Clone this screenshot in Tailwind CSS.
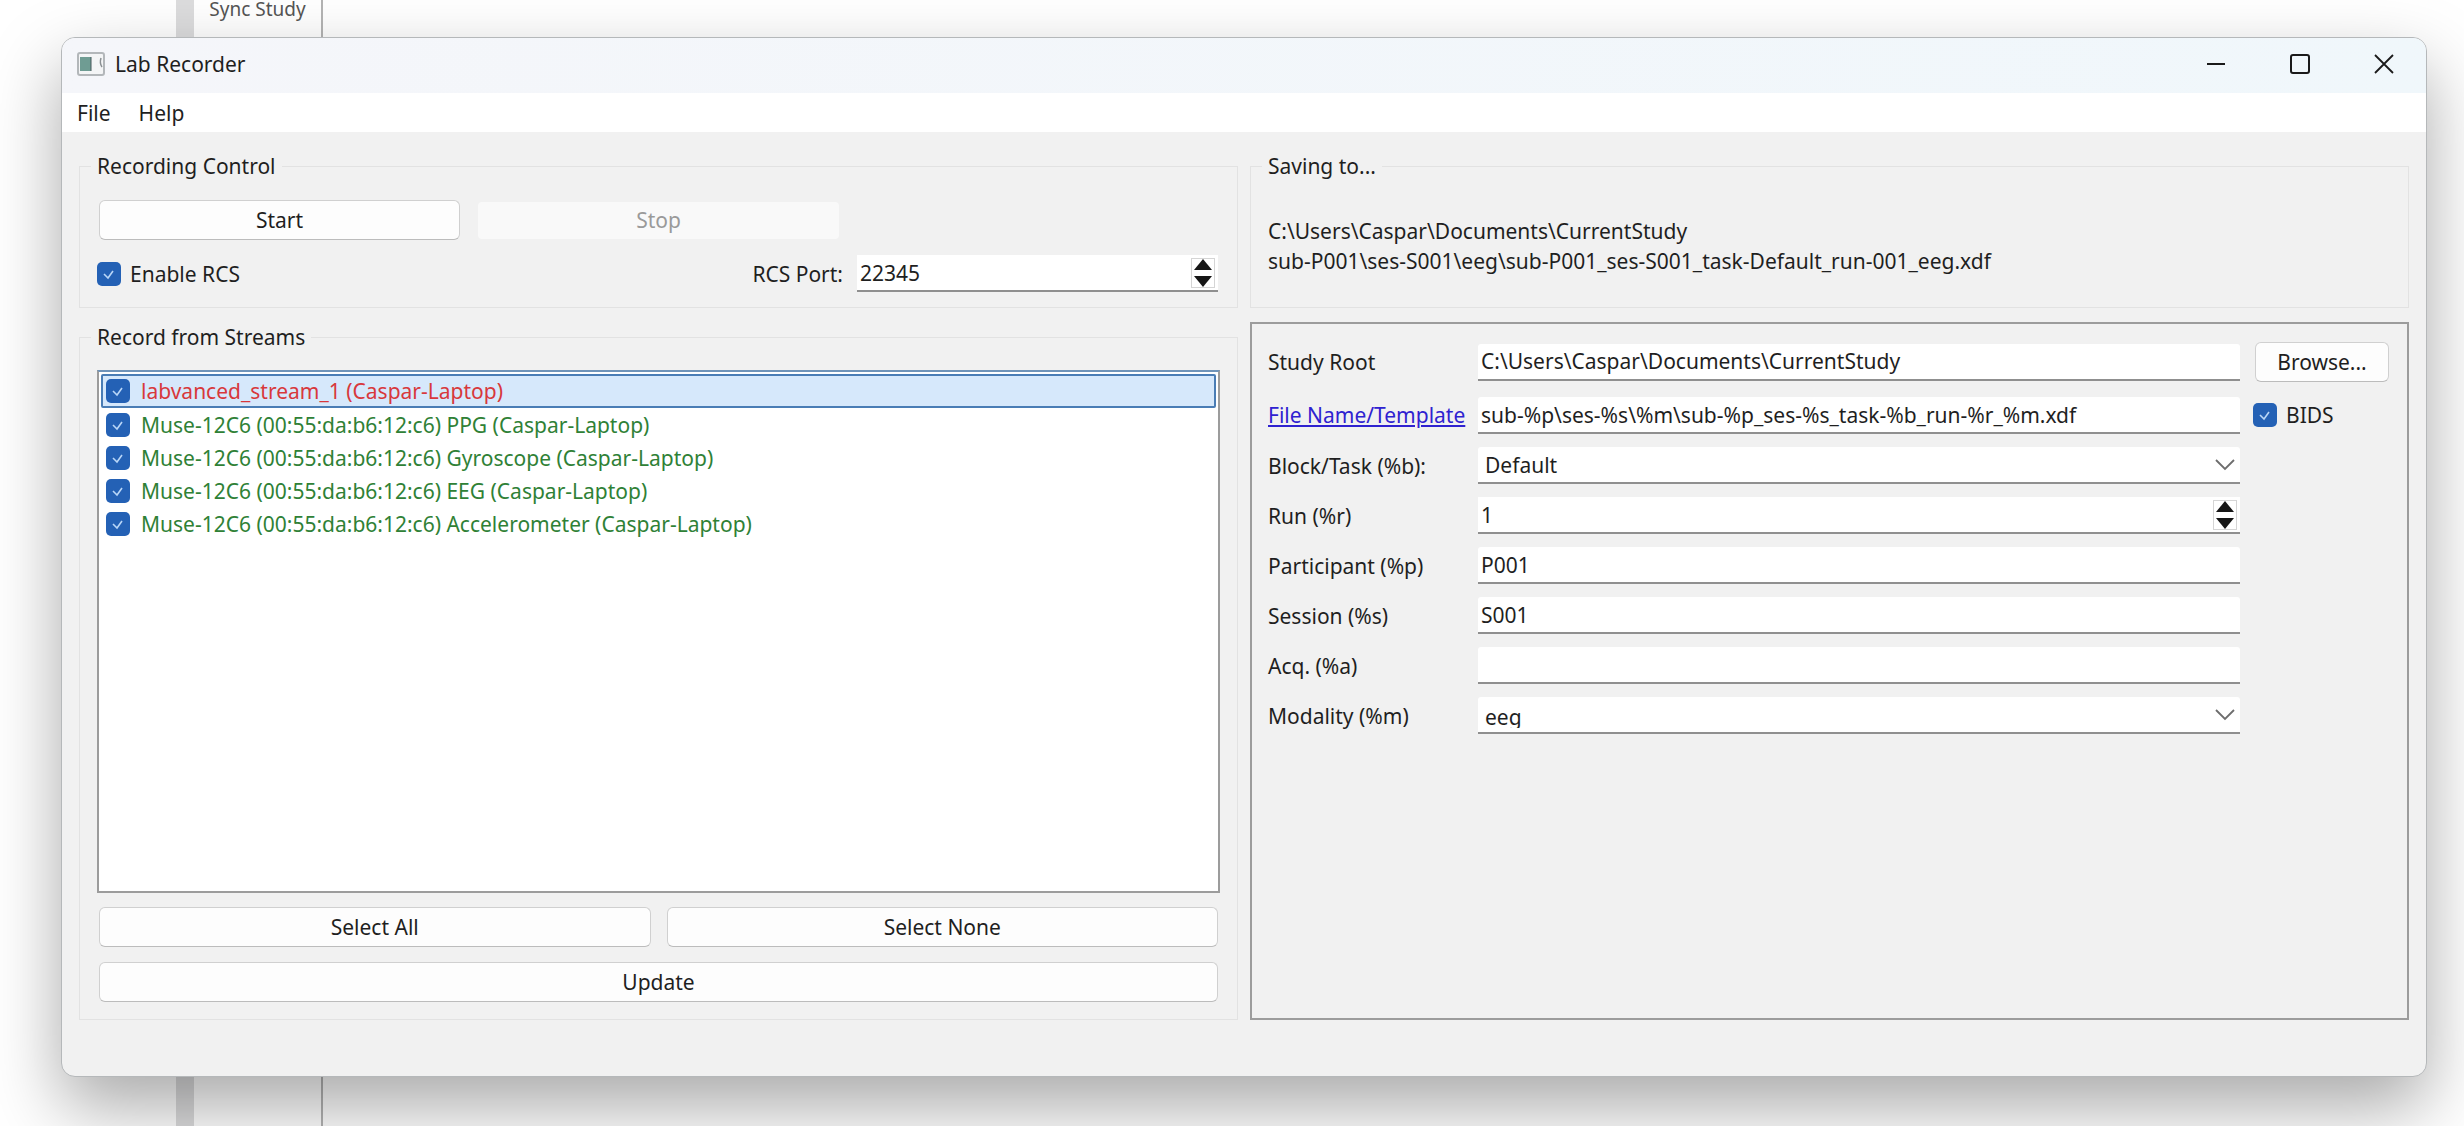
<!DOCTYPE html>
<html lang="en">

<head>
    <meta charset="UTF-8" />
    <meta name="viewport" content="width=device-width, initial-scale=1.0" />
    <title>Lab Recorder</title>
    <script src="https://cdn.jsdelivr.net/npm/@tailwindcss/browser@4"></script>
</head>

<body class="relative flex min-h-screen overflow-hidden bg-white pt-[37px] pr-[37px] pb-[49px] pl-[61px] font-['Noto_Sans',sans-serif] text-[21px] leading-[30px] text-[#1f1f1f]">
    <!-- page behind the window -->
    <div class="absolute inset-y-0 left-[176px] w-[147px] border-r-2 border-l-[18px] border-r-[#b4b4b4] border-l-[#dcdcdd]">
        <a href="#" class="-mt-[6px] block text-center text-[19px] text-[#555]">Sync Study</a>
    </div>

    <main class="relative flex flex-1 flex-col overflow-hidden rounded-[14px] border border-[#b5b8ba] bg-[#f1f1f1] shadow-[0_30px_70px_rgba(0,0,0,0.34)]">
        <header class="flex h-[55px] items-center bg-linear-to-r from-[#f5f6fa] to-[#f0f7fb] pb-[3px] pl-[15px]">
            <svg class="h-6 w-7" viewBox="0 0 28 24" fill="none">
                <rect x="1" y="1" width="26" height="22" rx="2" fill="#f4f5f6" stroke="#b3b7ba" stroke-width="2" />
                <rect x="3" y="5" width="11" height="14" fill="#6f9c93" />
                <path d="M14 5v14" stroke="#46585a" />
                <path d="M24 6c-1 3-1 6 1 9" stroke="#8b9093" stroke-width="1.5" />
            </svg>
            <h1 class="ml-[10px] flex-1">Lab Recorder</h1>
            <button aria-label="Minimize" class="flex h-full w-[84px] items-center justify-center">
                <svg class="size-5" viewBox="0 0 20 20" stroke="#1a1a1a" stroke-width="2"><path d="M1 10h18" /></svg>
            </button>
            <button aria-label="Maximize" class="flex h-full w-[84px] items-center justify-center">
                <svg class="size-5" viewBox="0 0 20 20" fill="none" stroke="#1a1a1a" stroke-width="2"><rect x="1" y="1" width="18" height="18" rx="2" /></svg>
            </button>
            <button aria-label="Close" class="flex h-full w-[84px] items-center justify-center">
                <svg class="size-5" viewBox="0 0 20 20" stroke="#1a1a1a" stroke-width="1.8"><path d="M1 1l18 18M19 1L1 19" /></svg>
            </button>
        </header>

        <nav class="flex h-[39px] items-center gap-7 bg-white pl-[15px]">
            <button>File</button>
            <button>Help</button>
        </nav>

        <div class="grid flex-1 grid-cols-2 grid-rows-[auto_1fr] gap-x-3 gap-y-[14px] px-[17px] pt-[19px] pb-14">
            <fieldset class="border border-[#e2e2e2] px-[17px] pt-[19px] pb-[15px]">
                <legend class="-ml-[6px] px-[6px]">Recording Control</legend>
                <div class="mx-0.5 grid grid-cols-3 items-center gap-x-[18px] gap-y-[15px]">
                    <button class="h-10 rounded-[6px] border border-[#d0d0d0] border-b-[#bcbcbc] bg-[#fdfdfd]">Start</button>
                    <button disabled class="h-[37px] rounded-[4px] bg-[#f9f9f9] text-[#9a9a9a]">Stop</button>
                    <span></span>
                    <label class="-ml-0.5 flex items-center gap-[9px]">
                        <span class="grid size-6">
                            <input type="checkbox" checked class="col-start-1 row-start-1 appearance-none rounded-[5px] bg-[#2461b5]" />
                            <svg class="pointer-events-none col-start-1 row-start-1 size-6" viewBox="0 0 24 24" fill="none" stroke="#b9d6f7" stroke-width="1.6"><path d="M7 12l4 4 5-7" /></svg>
                        </span>
                        Enable RCS
                    </label>
                    <label for="port" class="-mr-1 text-right">RCS Port:</label>
                    <div class="flex h-[37px] items-center border-b-2 border-[#8f8f8f] bg-white pr-[3px]">
                        <input id="port" type="number" value="22345" class="min-w-0 flex-1 [appearance:textfield] pl-[3px] outline-none" />
                        <div class="flex h-[30px] w-6 flex-col border border-[#d5d5d5]">
                            <button aria-label="Increase port" class="flex flex-1 items-start justify-center"><svg class="h-[11px] w-[18px]" viewBox="0 0 18 11" fill="#161616"><path d="M9 0l9 11H0z" /></svg></button>
                            <button aria-label="Decrease port" class="flex flex-1 items-end justify-center"><svg class="h-[11px] w-[18px]" viewBox="0 0 18 11" fill="#161616"><path d="M0 0h18L9 11z" /></svg></button>
                        </div>
                    </div>
                </div>
            </fieldset>

            <fieldset class="border border-[#e2e2e2] px-[17px] pt-[35px]">
                <legend class="-ml-[6px] px-[6px]">Saving to...</legend>
                <p>C:\Users\Caspar\Documents\CurrentStudy<br />sub-P001\ses-S001\eeg\sub-P001_ses-S001_task-Default_run-001_eeg.xdf</p>
            </fieldset>

            <fieldset class="flex flex-col border border-[#e2e2e2] px-[17px] pt-[18px] pb-[17px]">
                <legend class="-ml-[6px] px-[6px]">Record from Streams</legend>
                <ul class="flex-1 border-2 border-[#9c9c9c] border-t-[#6f93b8] bg-white p-0.5">
                    <li class="rounded-[2px] border-2 border-[#4a7db5] bg-[#d6e8fb]">
                        <label class="flex h-[30px] items-center gap-[11px] pl-[3px] text-[#d8383c]">
                            <span class="grid size-6">
                                <input type="checkbox" checked class="col-start-1 row-start-1 appearance-none rounded-[5px] bg-[#2461b5]" />
                                <svg class="pointer-events-none col-start-1 row-start-1 size-6" viewBox="0 0 24 24" fill="none" stroke="#b9d6f7" stroke-width="1.6"><path d="M7 12l4 4 5-7" /></svg>
                            </span>
                            labvanced_stream_1 (Caspar-Laptop)
                        </label>
                    </li>
                    <li>
                        <label class="flex h-[33px] items-center gap-[11px] pl-[5px] text-[#2f8136]">
                            <span class="grid size-6">
                                <input type="checkbox" checked class="col-start-1 row-start-1 appearance-none rounded-[5px] bg-[#2461b5]" />
                                <svg class="pointer-events-none col-start-1 row-start-1 size-6" viewBox="0 0 24 24" fill="none" stroke="#b9d6f7" stroke-width="1.6"><path d="M7 12l4 4 5-7" /></svg>
                            </span>
                            Muse-12C6 (00:55:da:b6:12:c6) PPG (Caspar-Laptop)
                        </label>
                    </li>
                    <li>
                        <label class="flex h-[33px] items-center gap-[11px] pl-[5px] text-[#2f8136]">
                            <span class="grid size-6">
                                <input type="checkbox" checked class="col-start-1 row-start-1 appearance-none rounded-[5px] bg-[#2461b5]" />
                                <svg class="pointer-events-none col-start-1 row-start-1 size-6" viewBox="0 0 24 24" fill="none" stroke="#b9d6f7" stroke-width="1.6"><path d="M7 12l4 4 5-7" /></svg>
                            </span>
                            Muse-12C6 (00:55:da:b6:12:c6) Gyroscope (Caspar-Laptop)
                        </label>
                    </li>
                    <li>
                        <label class="flex h-[33px] items-center gap-[11px] pl-[5px] text-[#2f8136]">
                            <span class="grid size-6">
                                <input type="checkbox" checked class="col-start-1 row-start-1 appearance-none rounded-[5px] bg-[#2461b5]" />
                                <svg class="pointer-events-none col-start-1 row-start-1 size-6" viewBox="0 0 24 24" fill="none" stroke="#b9d6f7" stroke-width="1.6"><path d="M7 12l4 4 5-7" /></svg>
                            </span>
                            Muse-12C6 (00:55:da:b6:12:c6) EEG (Caspar-Laptop)
                        </label>
                    </li>
                    <li>
                        <label class="flex h-[33px] items-center gap-[11px] pl-[5px] text-[#2f8136]">
                            <span class="grid size-6">
                                <input type="checkbox" checked class="col-start-1 row-start-1 appearance-none rounded-[5px] bg-[#2461b5]" />
                                <svg class="pointer-events-none col-start-1 row-start-1 size-6" viewBox="0 0 24 24" fill="none" stroke="#b9d6f7" stroke-width="1.6"><path d="M7 12l4 4 5-7" /></svg>
                            </span>
                            Muse-12C6 (00:55:da:b6:12:c6) Accelerometer (Caspar-Laptop)
                        </label>
                    </li>
                </ul>
                <div class="mx-0.5 mt-[14px] grid grid-cols-2 gap-x-4 gap-y-[15px]">
                    <button class="h-10 rounded-[6px] border border-[#d0d0d0] border-b-[#bcbcbc] bg-[#fdfdfd]">Select All</button>
                    <button class="h-10 rounded-[6px] border border-[#d0d0d0] border-b-[#bcbcbc] bg-[#fdfdfd]">Select None</button>
                    <button class="col-span-2 h-10 rounded-[6px] border border-[#d0d0d0] border-b-[#bcbcbc] bg-[#fdfdfd]">Update</button>
                </div>
            </fieldset>

            <form class="grid grid-cols-[195px_1fr_134px] content-start items-center gap-x-[15px] gap-y-[13px] border-2 border-[#9c9c9c] py-[18px] pr-[18px] pl-4">
                <label for="root">Study Root</label>
                <input id="root" type="text" value="C:\Users\Caspar\Documents\CurrentStudy" class="h-[37px] min-w-0 rounded-t-[3px] border-b-2 border-[#8f8f8f] bg-white px-[3px] outline-none" />
                <button type="button" class="h-10 rounded-[6px] border border-[#d0d0d0] border-b-[#bcbcbc] bg-[#fdfdfd]">Browse...</button>

                <a href="#" class="whitespace-nowrap text-[#2f22d0] underline">File Name/Template</a>
                <input aria-label="File Name/Template" type="text" value="sub-%p\ses-%s\%m\sub-%p_ses-%s_task-%b_run-%r_%m.xdf" class="mt-0.5 h-[37px] min-w-0 rounded-t-[3px] border-b-2 border-[#8f8f8f] bg-white px-[3px] outline-none" />
                <label class="-ml-0.5 flex items-center gap-[9px]">
                    <span class="grid size-6">
                        <input type="checkbox" checked class="col-start-1 row-start-1 appearance-none rounded-[5px] bg-[#2461b5]" />
                        <svg class="pointer-events-none col-start-1 row-start-1 size-6" viewBox="0 0 24 24" fill="none" stroke="#b9d6f7" stroke-width="1.6"><path d="M7 12l4 4 5-7" /></svg>
                    </span>
                    BIDS
                </label>

                <label for="block">Block/Task (%b):</label>
                <div class="flex h-[37px] items-center rounded-t-[3px] border-b-2 border-[#8f8f8f] bg-white">
                    <select id="block" class="h-[30px] flex-1 appearance-none pl-[7px] outline-none">
                        <option>Default</option>
                    </select>
                    <svg class="pointer-events-none mr-[5px] -ml-[25px] h-3 w-5" viewBox="0 0 20 12" fill="none" stroke="#6d6d6d" stroke-width="1.8"><path d="M1 1l9 9 9-9" /></svg>
                </div>

                <label for="run" class="col-start-1">Run (%r)</label>
                <div class="flex h-[37px] items-center border-b-2 border-[#8f8f8f] bg-white pr-[3px]">
                    <input id="run" type="number" value="1" class="min-w-0 flex-1 [appearance:textfield] pl-[3px] outline-none" />
                    <div class="flex h-[30px] w-6 flex-col border border-[#d5d5d5]">
                        <button type="button" aria-label="Increase run" class="flex flex-1 items-start justify-center"><svg class="h-[11px] w-[18px]" viewBox="0 0 18 11" fill="#161616"><path d="M9 0l9 11H0z" /></svg></button>
                        <button type="button" aria-label="Decrease run" class="flex flex-1 items-end justify-center"><svg class="h-[11px] w-[18px]" viewBox="0 0 18 11" fill="#161616"><path d="M0 0h18L9 11z" /></svg></button>
                    </div>
                </div>

                <label for="participant" class="col-start-1">Participant (%p)</label>
                <input id="participant" type="text" value="P001" class="h-[37px] min-w-0 rounded-t-[3px] border-b-2 border-[#8f8f8f] bg-white px-[3px] outline-none" />

                <label for="session" class="col-start-1">Session (%s)</label>
                <input id="session" type="text" value="S001" class="h-[37px] min-w-0 rounded-t-[3px] border-b-2 border-[#8f8f8f] bg-white px-[3px] outline-none" />

                <label for="acq" class="col-start-1">Acq. (%a)</label>
                <input id="acq" type="text" value="" class="h-[37px] min-w-0 rounded-t-[3px] border-b-2 border-[#8f8f8f] bg-white px-[3px] outline-none" />

                <label for="modality" class="col-start-1">Modality (%m)</label>
                <div class="flex h-[37px] items-center rounded-t-[3px] border-b-2 border-[#8f8f8f] bg-white">
                    <!-- short box, the descender is cut off -->
                    <select id="modality" class="h-[26px] flex-1 appearance-none overflow-clip pl-[7px] outline-none">
                        <option>eeg</option>
                    </select>
                    <svg class="pointer-events-none mr-[5px] -ml-[25px] h-3 w-5" viewBox="0 0 20 12" fill="none" stroke="#6d6d6d" stroke-width="1.8"><path d="M1 1l9 9 9-9" /></svg>
                </div>
            </form>
        </div>
    </main>
</body>

</html>
